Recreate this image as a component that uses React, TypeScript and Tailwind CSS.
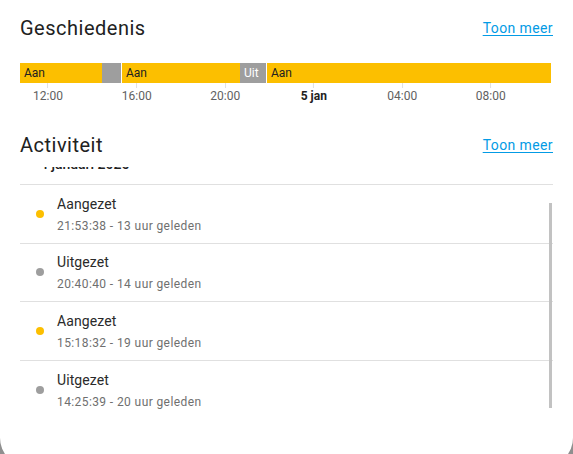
import React from 'react'

// Timeline segments of the history bar (widths in px, total 531)
const segments = [
  { label: 'Aan', width: 82, on: true },
  { label: '', width: 19, on: false },
  { label: 'gap', width: 1, on: false },
  { label: 'Aan', width: 118, on: true },
  { label: 'Uit', width: 26, on: false },
  { label: 'gap', width: 1, on: false },
  { label: 'Aan', width: 284, on: true },
]

const ticks = [
  { label: '12:00', x: 28 },
  { label: '16:00', x: 116.7 },
  { label: '20:00', x: 205.2 },
  { label: '5 jan', x: 293.8, bold: true },
  { label: '04:00', x: 382.3 },
  { label: '08:00', x: 470.8 },
]

const events = [
  { title: 'Aangezet', time: '21:53:38 - 13 uur geleden', on: true },
  { title: 'Uitgezet', time: '20:40:40 - 14 uur geleden', on: false },
  { title: 'Aangezet', time: '15:18:32 - 19 uur geleden', on: true },
  { title: 'Uitgezet', time: '14:25:39 - 20 uur geleden', on: false },
]

function SectionHeader({ title }: { title: string }) {
  return (
    <div className="flex h-7 items-center justify-between">
      <h2 className="text-[20px] leading-7 tracking-[0.5px] text-[#212121]">{title}</h2>
      <a href="#" className="text-[14px] leading-5 tracking-[0.4px] text-[#039be5] underline underline-offset-2">
        Toon meer
      </a>
    </div>
  )
}

export default function App() {
  return (
    <div className="min-h-screen bg-[#8f8f8f]" style={{ fontFamily: 'Roboto, "Noto Sans", sans-serif' }}>
      <div className="h-[466px] rounded-b-[28px] bg-white px-5 pt-[14px]">
        <SectionHeader title="Geschiedenis" />

        {/* history bar */}
        <div className="mt-[21px] flex h-5 w-[531px]">
          {segments.map((s, i) =>
            s.label === 'gap' ? (
              <div key={i} className="h-5 shrink-0 bg-white" style={{ width: s.width }} />
            ) : (
              <div
                key={i}
                className={`flex h-5 shrink-0 items-center overflow-hidden pl-1 text-[12px] leading-4 ${
                  s.on ? 'bg-[#fcbf00] text-[#212121]' : 'bg-[#9e9e9e] text-white'
                }`}
                style={{ width: s.width }}
              >
                {s.label}
              </div>
            )
          )}
        </div>

        {/* axis */}
        <div className="relative h-[21px]">
          {ticks.map((t) => (
            <div key={t.label} className="absolute top-0 flex -translate-x-1/2 flex-col items-center" style={{ left: t.x }}>
              <div className="h-[5px] w-px bg-[#e0e0e0]" />
              <span className={`text-[12px] leading-4 ${t.bold ? 'font-bold text-[#212121]' : 'text-[#616161]'}`}>
                {t.label}
              </span>
            </div>
          ))}
        </div>

        <div className="mt-[27px]">
          <SectionHeader title="Activiteit" />
        </div>

        {/* activity list */}
        <div className="relative mt-2 h-[256px] overflow-hidden">
          <div className="-mt-[13px] border-b border-[#e0e0e0] pb-[10px] pl-5 text-[14px] font-medium leading-5 text-[#212121]">
            4 januari 2025
          </div>
          {events.map((e, i) => (
            <div
              key={i}
              className={`flex h-[58.67px] items-center ${i < events.length - 1 ? 'border-b border-[#e0e0e0]' : ''}`}
            >
              <div className={`ml-4 h-2 w-2 shrink-0 rounded-full ${e.on ? 'bg-[#fcbf00]' : 'bg-[#9e9e9e]'}`} />
              <div className="ml-[13px] flex flex-col">
                <span className="text-[14px] leading-6 tracking-[0.1px] text-[#2a2a2a]">{e.title}</span>
                <span className="text-[12px] leading-5 tracking-[0.4px] text-[#6f6f6f]">{e.time}</span>
              </div>
            </div>
          ))}
          <div className="absolute right-[1px] top-[36px] h-[205px] w-[3px] bg-[#c2c2c2]" />
        </div>
      </div>
    </div>
  )
}
